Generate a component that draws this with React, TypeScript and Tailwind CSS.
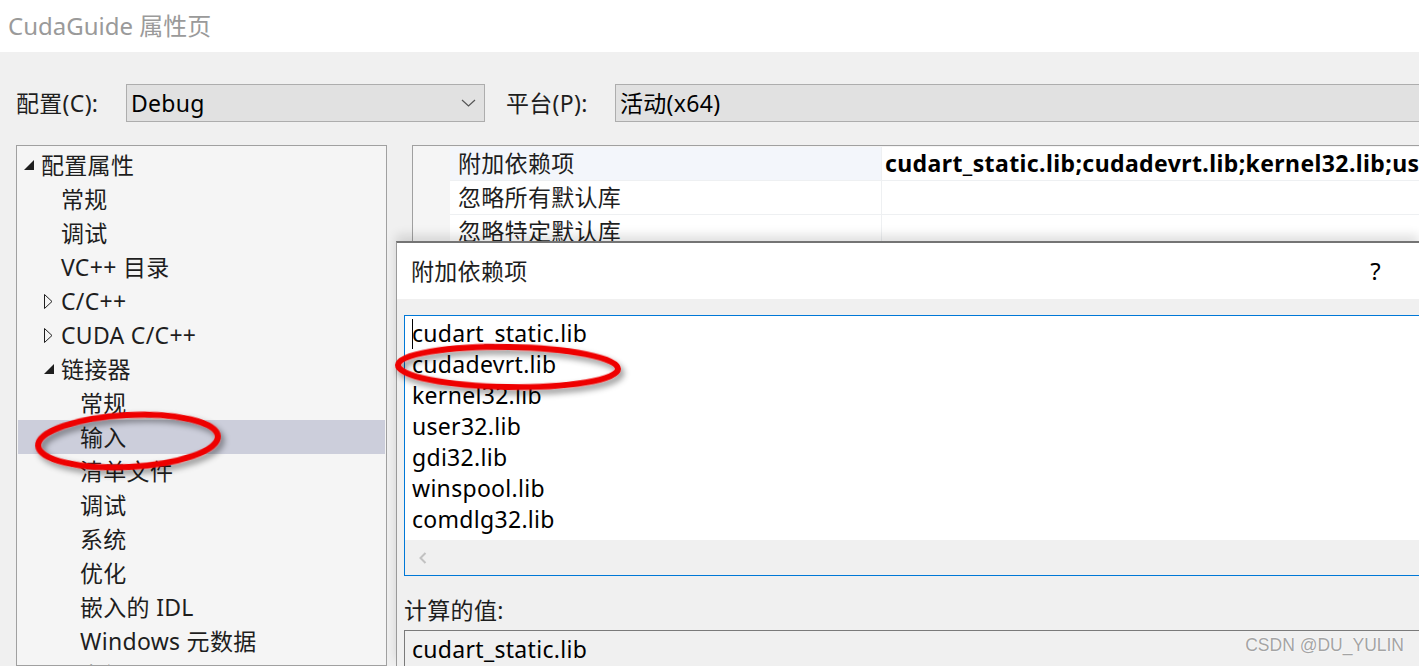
import React from "react";

type TreeItem = { label: string; level: 0 | 1 | 2; arrow?: "open" | "closed"; selected?: boolean };

const treeItems: TreeItem[] = [
  { label: "配置属性", level: 0, arrow: "open" },
  { label: "常规", level: 1 },
  { label: "调试", level: 1 },
  { label: "VC++ 目录", level: 1 },
  { label: "C/C++", level: 1, arrow: "closed" },
  { label: "CUDA C/C++", level: 1, arrow: "closed" },
  { label: "链接器", level: 1, arrow: "open" },
  { label: "常规", level: 2 },
  { label: "输入", level: 2, selected: true },
  { label: "清单文件", level: 2 },
  { label: "调试", level: 2 },
  { label: "系统", level: 2 },
  { label: "优化", level: 2 },
  { label: "嵌入的 IDL", level: 2 },
  { label: "Windows 元数据", level: 2 },
  { label: "高级", level: 2 },
];

const indent = ["pl-[6px]", "pl-[26px]", "pl-[45px]"];

const libs = [
  "cudart_static.lib",
  "cudadevrt.lib",
  "kernel32.lib",
  "user32.lib",
  "gdi32.lib",
  "winspool.lib",
  "comdlg32.lib",
];

const gridRows = [
  { name: "附加依赖项", value: "cudart_static.lib;cudadevrt.lib;kernel32.lib;us" },
  { name: "忽略所有默认库", value: "" },
  { name: "忽略特定默认库", value: "" },
  { name: "模块定义文件", value: "" },
];

function Arrow({ kind }: { kind?: "open" | "closed" }) {
  return (
    <span className="w-[17px] h-[34px] flex items-center shrink-0">
      {kind === "open" && (
        <svg width="11" height="11" viewBox="0 0 11 11">
          <polygon points="10,0 10,10 0,10" fill="#1e1e1e" />
        </svg>
      )}
      {kind === "closed" && (
        <svg width="9" height="15" viewBox="0 0 9 15">
          <polygon points="0.5,0.5 8,7.5 0.5,14.5" fill="none" stroke="#1e1e1e" strokeWidth="1" />
        </svg>
      )}
    </span>
  );
}

function Combo({ text, chevron, className }: { text: string; chevron?: boolean; className: string }) {
  return (
    <div className={`h-[38px] bg-[#e1e1e1] border border-[#adadad] flex items-center pl-[4px] ${className}`}>
      <span className="flex-1 text-black">{text}</span>
      {chevron && (
        <svg width="15" height="8" viewBox="0 0 15 8" className="mr-[8px]">
          <polyline points="1,1 7.5,7 14,1" fill="none" stroke="#555" strokeWidth="1.2" />
        </svg>
      )}
    </div>
  );
}

export default function App() {
  return (
    <div className="relative w-[1419px] h-[666px] overflow-hidden flex flex-col bg-[#f0f0f0] font-['Noto_Sans','Noto_Sans_CJK_SC',sans-serif] text-[23px] tracking-[0.3px] text-[#1e1e1e]">
      {/* window title */}
      <div className="h-[52px] bg-white flex items-center pl-[8px] text-[24px] tracking-normal text-[#9a9a9a] shrink-0">
        CudaGuide 属性页
      </div>

      <div className="flex-1 flex flex-col pl-[16px] min-h-0">
        {/* configuration row */}
        <div className="mt-[32px] flex items-center shrink-0">
          <span className="w-[110px]">配置(C):</span>
          <Combo text="Debug" chevron className="w-[359px]" />
          <span className="ml-[21px] w-[109px]">平台(P):</span>
          <Combo text="活动(x64)" className="flex-1 border-r-0" />
        </div>

        <div className="mt-[23px] flex flex-1 min-h-0 gap-[25px]">
          {/* tree */}
          <div className="w-[371px] shrink-0 border border-[#a0a0a0] bg-[#f5f5f5] pt-[2px] px-px overflow-hidden">
            {treeItems.map((it, i) => (
              <div
                key={i}
                className={`h-[34px] flex items-center ${indent[it.level]} ${it.selected ? "bg-[#cccedb]" : ""}`}
              >
                <Arrow kind={it.arrow} />
                <span className="whitespace-nowrap leading-none">{it.label}</span>
              </div>
            ))}
          </div>

          {/* property grid */}
          <div className="flex-1 border border-r-0 border-[#a0a0a0] bg-[#f5f5f5] pt-px overflow-hidden">
            {gridRows.map((r, i) => (
              <div key={i} className="h-[34px] flex">
                <div className="w-[37px] shrink-0" />
                <div
                  className={`w-[431px] shrink-0 flex items-center pl-[8px] border-b border-[#eef0f2] ${
                    i === 0 ? "bg-[#f3f6fb]" : "bg-white"
                  }`}
                >
                  {r.name}
                </div>
                <div className="flex-1 min-w-0 flex items-center pl-[3px] bg-white border-l border-b border-[#eef0f2] font-bold tracking-[0.4px] whitespace-nowrap overflow-hidden text-black">
                  {r.value}
                </div>
              </div>
            ))}
          </div>
        </div>
      </div>

      {/* additional dependencies dialog */}
      <div className="absolute left-[396px] top-[241px] right-0 bottom-0 flex flex-col border-l border-t-2 border-l-[#9a9a9a] border-t-[#747474] shadow-[0_-6px_10px_rgba(0,0,0,0.12)] bg-[#f0f0f0]">
        <div className="h-[56px] bg-white flex items-center pl-[14px] pr-[38px] shrink-0">
          <span className="flex-1">附加依赖项</span>
          <span className="text-[24px] text-black">?</span>
        </div>
        <div className="flex-1 flex flex-col pl-[7px] pt-[16px]">
          <div className="border border-r-0 border-[#0078d7] bg-white flex flex-col shrink-0">
            <div className="h-[224px] pl-[7px] pt-[2px] leading-[31px] text-black">
              {libs.map((l, i) => (
                <div key={l} className="flex items-center whitespace-nowrap">
                  {i === 0 && <span className="w-px h-[30px] bg-black -mr-px" />}
                  {l}
                </div>
              ))}
            </div>
            <div className="h-[35px] bg-[#f0f0f0] flex items-center pl-[14px]">
              <svg width="8" height="12" viewBox="0 0 8 12">
                <polyline points="6.5,1 1.5,6 6.5,11" fill="none" stroke="#c2c2c2" strokeWidth="2" />
              </svg>
            </div>
          </div>
          <div className="mt-[19px] leading-[31px]">计算的值:</div>
          <div className="mt-[4px] flex-1 border-t border-l border-[#7a7a7a] pl-[7px] pt-[3px] leading-[31px] text-black">
            cudart_static.lib
          </div>
        </div>
      </div>

      {/* red annotation ellipses */}
      <svg className="absolute left-0 top-0 pointer-events-none" width="1419" height="666">
        <defs>
          <filter id="sh" x="-20%" y="-50%" width="140%" height="200%">
            <feDropShadow dx="3" dy="4" stdDeviation="3" floodColor="#000" floodOpacity="0.45" />
          </filter>
        </defs>
        <ellipse cx="128" cy="441" rx="90" ry="26" transform="rotate(-3 128 441)" fill="none" stroke="#ee0000" strokeWidth="6" filter="url(#sh)" />
        <ellipse cx="508" cy="367" rx="110" ry="20" transform="rotate(1 508 367)" fill="none" stroke="#ee0000" strokeWidth="6" filter="url(#sh)" />
      </svg>

      {/* watermark */}
      <div className="absolute right-[15px] bottom-[8px] text-[17.5px] tracking-normal text-[#a4a4a4] font-['Liberation_Sans',sans-serif] [text-shadow:0_0_2px_#fff,0_0_1px_#fff]">
        CSDN @DU_YULIN
      </div>
    </div>
  );
}
